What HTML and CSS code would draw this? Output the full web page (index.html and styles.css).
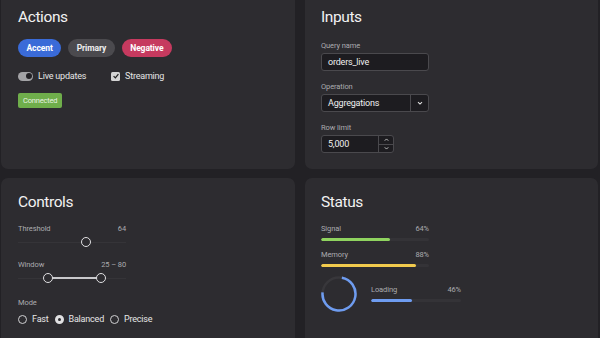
FILE: index.html
```html
<!DOCTYPE html>
<html lang="en">
<head>
<meta charset="utf-8">
<title>Panels</title>
<link rel="stylesheet" href="styles.css">
</head>
<body>
<div class="grid">
  <section class="card">
    <h2 class="title">Actions</h2>
    <div class="btn-row">
      <button class="btn accent">Accent</button>
      <button class="btn primary">Primary</button>
      <button class="btn negative">Negative</button>
    </div>
    <div class="check-row">
      <label class="toggle-label"><span class="toggle"><span class="knob"></span></span>Live updates</label>
      <label class="check-label"><span class="checkbox"><svg viewBox="0 0 10 10" width="8" height="8"><path d="M2 5.2 L4.2 7.3 L8 2.6" fill="none" stroke="#222" stroke-width="1.6"/></svg></span>Streaming</label>
    </div>
    <div class="badge">Connected</div>
  </section>

  <section class="card">
    <h2 class="title">Inputs</h2>
    <div class="field first">
      <div class="label">Query name</div>
      <div class="input text-input">orders_live</div>
    </div>
    <div class="field">
      <div class="label">Operation</div>
      <div class="input select">
        <span class="sel-value">Aggregations</span>
        <span class="sel-btn"><svg viewBox="0 0 10 10" width="8" height="8"><path d="M2.5 3.8 L5 6.3 L7.5 3.8" fill="none" stroke="#ddd" stroke-width="1.4"/></svg></span>
      </div>
    </div>
    <div class="field">
      <div class="label">Row limit</div>
      <div class="input number">
        <span class="num-value">5,000</span>
        <span class="stepper">
          <span class="step"><svg viewBox="0 0 10 8" width="7" height="6"><path d="M2.5 5 L5 2.5 L7.5 5" fill="none" stroke="#ccc" stroke-width="1.3"/></svg></span>
          <span class="step"><svg viewBox="0 0 10 8" width="7" height="6"><path d="M2.5 3 L5 5.5 L7.5 3" fill="none" stroke="#ccc" stroke-width="1.3"/></svg></span>
        </span>
      </div>
    </div>
  </section>

  <section class="card">
    <h2 class="title">Controls</h2>
    <div class="slider first">
      <div class="slider-head"><span class="label">Threshold</span><span class="label">64</span></div>
      <div class="track-wrap">
        <div class="track"></div>
        <span class="thumb" style="--v: 0.64"></span>
      </div>
    </div>
    <div class="slider">
      <div class="slider-head"><span class="label">Window</span><span class="label">25 – 80</span></div>
      <div class="track-wrap">
        <div class="track"></div>
        <div class="range-fill" style="--a: 0.25; --b: 0.80"></div>
        <span class="thumb" style="--v: 0.25"></span>
        <span class="thumb" style="--v: 0.80"></span>
      </div>
    </div>
    <div class="label mode-label">Mode</div>
    <div class="radio-row">
      <label class="radio-label"><span class="radio"></span>Fast</label>
      <label class="radio-label"><span class="radio on"></span>Balanced</label>
      <label class="radio-label"><span class="radio"></span>Precise</label>
    </div>
  </section>

  <section class="card">
    <h2 class="title">Status</h2>
    <div class="meter first">
      <div class="slider-head"><span class="label">Signal</span><span class="label">64%</span></div>
      <div class="bar"><div class="fill green" style="width: 64%"></div></div>
    </div>
    <div class="meter">
      <div class="slider-head"><span class="label">Memory</span><span class="label">88%</span></div>
      <div class="bar"><div class="fill yellow" style="width: 88%"></div></div>
    </div>
    <div class="loading-row">
      <svg class="spinner" viewBox="0 0 36 36" width="36" height="36">
        <circle cx="18" cy="18" r="16.5" fill="none" stroke="#38373b" stroke-width="2.5"/>
        <circle cx="18" cy="18" r="16.5" fill="none" stroke="#6e9cf0" stroke-width="2.5" stroke-dasharray="76 200" transform="rotate(-80 18 18)"/>
      </svg>
      <div class="meter loading">
        <div class="slider-head"><span class="label">Loading</span><span class="label">46%</span></div>
        <div class="bar"><div class="fill blue" style="width: 46%"></div></div>
      </div>
    </div>
  </section>
</div>
</body>
</html>
```

FILE: styles.css
```css
* { box-sizing: border-box; }
html, body {
  margin: 0;
  padding: 0;
  background: #222125;
  overflow: hidden;
}
body {
  font-family: Roboto, "Open Sans", sans-serif;
  color: #e6e6e6;
}
.grid {
  display: grid;
  grid-template-columns: 294px 293px;
  grid-auto-rows: 176px;
  column-gap: 10px;
  row-gap: 9px;
  margin-top: -7px;
  padding-left: 1px;
}
.card {
  background: #2d2c30;
  border-radius: 7px;
  padding: 14px 17px 0 17px;
}
.card:nth-child(2n) { padding-left: 16px; }
.title {
  margin: 0;
  font-size: 15.5px;
  line-height: 20px;
  font-weight: 400;
  letter-spacing: -0.4px;
  color: #f2f2f2;
}
.btn-row {
  display: flex;
  gap: 7px;
  margin-top: 12px;
}
.btn {
  height: 18px;
  border: none;
  border-radius: 9px;
  padding: 0 8.5px;
  font-family: inherit;
  font-size: 8.5px;
  font-weight: 700;
  letter-spacing: -0.1px;
  color: #fff;
  line-height: 18px;
}
.accent { background: #3a6bd8; }
.primary { background: #4b4a4e; color: #eee; }
.negative { background: #c63a5f; }
.check-row {
  display: flex;
  align-items: center;
  margin-top: 13px;
  height: 12px;
  font-size: 9px;
  letter-spacing: -0.2px;
  color: #e6e6e6;
}
.toggle-label, .check-label {
  display: flex;
  align-items: center;
}
.toggle-label { width: 93px; }
.toggle {
  width: 15px;
  height: 9px;
  border-radius: 5px;
  background: #a3a3a6;
  position: relative;
  margin-right: 5px;
}
.knob {
  position: absolute;
  right: 1.5px;
  top: 1.5px;
  width: 6px;
  height: 6px;
  border-radius: 50%;
  background: #222125;
}
.checkbox {
  width: 9px;
  height: 9px;
  border-radius: 1.5px;
  background: #d4d4d4;
  display: flex;
  align-items: center;
  justify-content: center;
  margin-right: 5px;
}
.badge {
  display: inline-block;
  margin-top: 11px;
  height: 15px;
  line-height: 15px;
  padding: 0 5px;
  font-size: 7.5px;
  letter-spacing: -0.2px;
  color: #e9f3e2;
  background: #6fae4b;
  border-radius: 2px;
}
.label {
  font-size: 7.5px;
  line-height: 10px;
  letter-spacing: -0.1px;
  color: #ababaf;
}
.field { margin-top: 11px; }
.field.first { margin-top: 14px; }
.field .label { margin-bottom: 2px; }
.input {
  width: 108px;
  height: 18px;
  background: #1d1c20;
  border: 1px solid #4a494d;
  border-radius: 3px;
  font-size: 9px;
  letter-spacing: -0.2px;
  color: #f0f0f0;
  display: flex;
  align-items: center;
}
.text-input { padding-left: 6px; }
.sel-value { flex: 1; padding-left: 6px; }
.sel-btn {
  width: 18px;
  height: 100%;
  border-left: 1px solid #4a494d;
  display: flex;
  align-items: center;
  justify-content: center;
}
.number { width: 73px; }
.num-value { flex: 1; padding-left: 6px; }
.stepper {
  width: 15px;
  height: 100%;
  border-left: 1px solid #4a494d;
  display: flex;
  flex-direction: column;
}
.step {
  flex: 1;
  display: flex;
  align-items: center;
  justify-content: center;
}
.step + .step { border-top: 1px solid #4a494d; }
.slider { width: 108px; margin-top: 12px; }
.slider-head {
  display: flex;
  justify-content: space-between;
}
.track-wrap {
  position: relative;
  height: 12px;
  margin-top: 2px;
}
.track {
  position: absolute;
  left: 0;
  right: 0;
  top: 5.5px;
  height: 1px;
  background: #353438;
}
.range-fill {
  position: absolute;
  top: 5px;
  height: 2px;
  background: #c8c8cb;
  left: calc(5px + var(--a) * (100% - 10px));
  width: calc((var(--b) - var(--a)) * (100% - 10px));
}
.thumb {
  position: absolute;
  top: 1px;
  left: calc(var(--v) * (100% - 10px));
  width: 10px;
  height: 10px;
  border-radius: 50%;
  border: 1.5px solid #e0e0e2;
  background: #2d2c30;
}
.mode-label { margin-top: 14px; }
.radio-row {
  display: flex;
  align-items: center;
  height: 12px;
  margin-top: 5px;
  font-size: 9px;
  letter-spacing: -0.2px;
  color: #e6e6e6;
}
.radio-label {
  display: flex;
  align-items: center;
  margin-right: 6px;
}
.radio {
  width: 9px;
  height: 9px;
  border-radius: 50%;
  border: 1.5px solid #d0d0d2;
  margin-right: 5px;
}
.radio.on {
  background: #2d2c30;
  border: 3px solid #e0e0e2;
}
.meter { width: 108px; }
.meter.first { margin-top: 12px; }
.meter + .meter { margin-top: 9px; }
.bar {
  margin-top: 4px;
  height: 3px;
  background: #343337;
  border-radius: 1.5px;
  overflow: hidden;
}
.fill { height: 100%; border-radius: 1.5px; }
.green { background: #8fd35f; }
.yellow { background: #f1ca4d; }
.blue { background: #6e9cf0; }
.loading-row {
  display: flex;
  align-items: center;
  margin-top: 9px;
}
.spinner { flex: none; margin-right: 14px; }
.meter.loading { width: 90px; margin-top: -2px; }
```
